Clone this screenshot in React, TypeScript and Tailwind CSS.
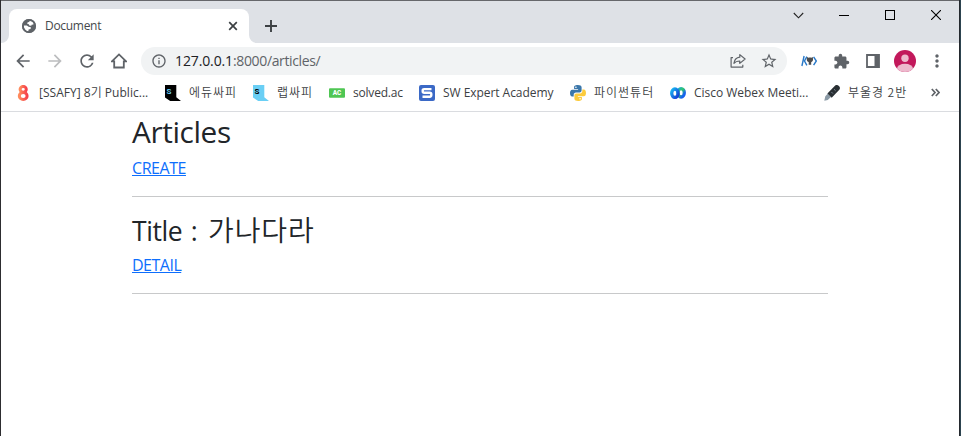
import type { ReactNode } from "react";
import { MdArrowBack, MdArrowForward, MdRefresh, MdInfoOutline, MdStarBorder, MdExtension, MdMoreVert } from "react-icons/md";

function GlobeIcon() {
  return (
    <svg className="size-[14px]" viewBox="0 0 14 14">
      <circle cx="7" cy="7" r="7" fill="#5f6368" />
      <path d="M7.6 1.6h3l1.4 2-.6 1.8-1.8.3-.3 1-2-.1-.4-1.4-1.6-.3.3-1.6 1.7-.3zM1.6 6.6h3.2l1.8 1.2 2.3.4-.3 1.9-2 .4-.3 1.9-1.9-.5-2.1-2.2z" fill="#fff" />
      <circle cx="7" cy="7" r="6.1" fill="none" stroke="#5f6368" strokeWidth="1.8" />
    </svg>
  );
}

function EightIcon() {
  return (
    <svg className="size-4" viewBox="0 0 16 16">
      <defs>
        <linearGradient id="eight" x1="0" x2="1">
          <stop offset="0" stopColor="#ff8a5c" />
          <stop offset="1" stopColor="#f5414b" />
        </linearGradient>
      </defs>
      <g fill="none" stroke="url(#eight)" strokeWidth="3">
        <ellipse cx="8.2" cy="4.3" rx="3.1" ry="2.9" />
        <ellipse cx="8.2" cy="10.9" rx="3.9" ry="3.5" />
      </g>
    </svg>
  );
}

function BookIcon({ fill, letter }: { fill: string; letter: string }) {
  return (
    <svg className="size-4" viewBox="0 0 16 16">
      <path d="M0 0h11.3v12.3L16 16H5.2L0 12.5z" fill={fill} />
      <text x="1.6" y="8.9" fontSize="8" fontWeight="700" fontFamily="Roboto, sans-serif" fill={letter}>S</text>
    </svg>
  );
}

function SolvedIcon() {
  return (
    <svg className="size-4" viewBox="0 0 16 16">
      <rect y="3.3" width="16" height="9.4" rx="1" fill="#4fc653" />
      <text x="3.8" y="10.3" fontSize="6.4" fontWeight="900" fontFamily="Roboto, sans-serif" fill="#fff">AC</text>
    </svg>
  );
}

function ExpertIcon() {
  return (
    <svg className="size-4" viewBox="0 0 16 16">
      <rect width="16" height="16" rx="2" fill="#3b69c6" />
      <path d="M12.5 4.1H5.2c-1.3 0-1.5.6-1.5 1.5v.7c0 1 .4 1.5 1.5 1.5h5.6c1.1 0 1.5.5 1.5 1.5v.8c0 1-.4 1.6-1.5 1.6H3.5" fill="none" stroke="#fff" strokeWidth="2.4" />
    </svg>
  );
}

function PythonIcon() {
  return (
    <svg className="size-4" viewBox="0 0 16 16">
      <path d="M7.9 0C4.7 0 4.1 1 4.1 2.2V4h4v.7H2.2C.8 4.7 0 6 0 8s.8 3.6 2.1 3.6h1.6V9.7c0-1.2 1-2.2 2.2-2.2h3.8c1.1 0 1.9-.8 1.9-1.9V2.2C11.6.8 10 0 7.9 0z" fill="#3b77aa" />
      <path d="M8.1 16c3.2 0 3.8-1 3.8-2.2V12h-4v-.7h5.9C15.2 11.3 16 10 16 8s-.8-3.6-2.1-3.6h-1.6v1.9c0 1.2-1 2.2-2.2 2.2H6.3c-1.1 0-1.9.8-1.9 1.9v3.4C4.4 15.2 6 16 8.1 16z" fill="#fccb3c" />
      <circle cx="5.9" cy="2.2" r=".8" fill="#fff" />
      <circle cx="10.1" cy="13.8" r=".8" fill="#fff" />
    </svg>
  );
}

function WebexIcon() {
  return (
    <svg className="size-4" viewBox="0 0 16 16">
      <defs>
        <linearGradient id="webexRight" x1="0" y1="0" x2="1" y2="1">
          <stop offset="0" stopColor="#1ca7d8" />
          <stop offset=".4" stopColor="#31c96a" />
          <stop offset=".8" stopColor="#1762ee" />
        </linearGradient>
        <linearGradient id="webexLeft" x1="0" y1="0" x2="1" y2="1">
          <stop offset="0" stopColor="#18b6f2" />
          <stop offset="1" stopColor="#1237d4" />
        </linearGradient>
      </defs>
      <ellipse cx="11.1" cy="7.8" rx="3.2" ry="4.2" fill="none" stroke="url(#webexRight)" strokeWidth="3.3" />
      <ellipse cx="4.9" cy="8.2" rx="3.2" ry="4.2" fill="none" stroke="url(#webexLeft)" strokeWidth="3.3" />
    </svg>
  );
}

function PenIcon() {
  return (
    <svg className="size-4" viewBox="0 0 16 16">
      <path d="m.3 15.8 1-4.6 2.4-2.4 3.2 3.1-3.1 3z" fill="#8b9aa6" />
      <path d="m3.4 8.5 7.3-7.6c1.2-1.2 2.6-1.2 3.9-.2 1.7 1.3 1.7 2.9.7 4.1l-7.6 7.9z" fill="#292f33" />
      <path d="m10.2 4.4 1.3 1.3M7.6 7.2l1.3 1.3" stroke="#8b9aa6" strokeWidth="1" />
    </svg>
  );
}

type Bookmark = { icon: ReactNode; label: ReactNode; box: string };

const ko = "font-['Noto_Sans_CJK_KR',sans-serif] font-[350] leading-none";

const bookmarks: Bookmark[] = [
  { icon: <EightIcon />, box: "w-[150px]", label: <span className="tracking-[0.02px]">[SSAFY] 8<span className={ko}>기</span> Public...</span> },
  { icon: <BookIcon fill="#000" letter="#65c9ef" />, box: "w-[88px]", label: <span className={`${ko} tracking-[1px]`}>에듀싸피</span> },
  { icon: <BookIcon fill="#6acff5" letter="#000" />, box: "w-[76px]", label: <span className={`${ko} tracking-[1px]`}>랩싸피</span> },
  { icon: <SolvedIcon />, box: "w-[90px]", label: <span className="tracking-[-0.2px]">solved.ac</span> },
  { icon: <ExpertIcon />, box: "w-[151px]", label: <span className="tracking-[-0.05px]">SW Expert Academy</span> },
  { icon: <PythonIcon />, box: "w-[100px]", label: <span className={`${ko} tracking-[1px]`}>파이썬튜터</span> },
  { icon: <WebexIcon />, box: "w-[154px]", label: <span className="tracking-[-0.02px]">Cisco Webex Meeti...</span> },
  { icon: <PenIcon />, box: "w-[100px]", label: <span className={`${ko} tracking-[0.95px]`}>부울경 2반</span> },
];

function Cell({ children }: { children: ReactNode }) {
  return <div className="flex h-8 w-8 shrink-0 items-center justify-center text-[#5f6368]">{children}</div>;
}

function TabStrip() {
  return (
    <div className="flex h-[42px] shrink-0 bg-[#dee1e6]">
      <div className="relative ml-2 mt-2 flex h-[34px] w-[240px] items-center rounded-t-lg bg-white pl-[13px] pr-[11px]">
        <svg className="absolute -left-2 bottom-0 size-2" viewBox="0 0 8 8"><path d="M8 0v8H0a8 8 0 0 0 8-8z" fill="#fff" /></svg>
        <svg className="absolute -right-2 bottom-0 size-2" viewBox="0 0 8 8"><path d="M0 0v8h8a8 8 0 0 1-8-8z" fill="#fff" /></svg>
        <GlobeIcon />
        <span className="ml-[9px] flex-1 text-[12px] tracking-[-0.3px] text-[#45484c]">Document</span>
        <svg className="size-[10px]" viewBox="0 0 10 10"><path d="m1.2 1.2 7.6 7.6m0-7.6L1.2 8.8" stroke="#3c4043" strokeWidth="1.7" /></svg>
      </div>
      <svg className="ml-4 mt-[19px] size-3" viewBox="0 0 12 12"><path d="M6 0v12M0 6h12" stroke="#3c4043" strokeWidth="1.9" /></svg>
      <div className="ml-auto flex h-7 text-black">
        <div className="flex w-[46px] items-center justify-center"><svg className="size-[11px]" viewBox="0 0 11 11"><path d="m.8 3 4.7 4.8L10.2 3" fill="none" stroke="#222" strokeWidth="1.1" /></svg></div>
        <div className="flex w-[46px] items-center justify-center"><span className="h-px w-[10px] bg-black" /></div>
        <div className="flex w-[46px] items-center justify-center"><span className="size-[10px] border border-black" /></div>
        <div className="flex w-[46px] items-center justify-center"><svg className="size-[10px]" viewBox="0 0 10 10"><path d="m0 0 10 10M10 0 0 10" stroke="#000" strokeWidth="1.1" /></svg></div>
      </div>
    </div>
  );
}

function Toolbar() {
  return (
    <div className="flex h-9 shrink-0 items-center pl-[6px]">
      <Cell><MdArrowBack size={20} /></Cell>
      <Cell><MdArrowForward size={20} className="text-[#bcbdbf]" /></Cell>
      <Cell><MdRefresh size={20} /></Cell>
      <Cell><svg className="size-4" viewBox="0 0 16 16"><path d="M.9 8.3 8 1.4l7.1 6.9H12.8v6.2H3.2V8.3z" fill="none" stroke="currentColor" strokeWidth="1.8" /></svg></Cell>
      <div className="ml-[6px] flex h-7 w-[646px] shrink-0 items-center rounded-full bg-[#f1f3f4] pl-[10px] text-[#5f6368]">
        <MdInfoOutline size={16} />
        <span className="ml-2 flex-1 text-[14px] leading-5 tracking-[-0.36px]"><span className="tracking-[-0.12px] text-[#202124]">127.0.0.1</span>:8000/articles/</span>
        <svg className="mr-[14px] size-4" viewBox="0 0 16 16"><path d="M3 4.6H1.1v9.5h11.7v-2.3M9.8 1.6l5.3 4.4-5.3 4.4V8c-2.8 0-4.5.6-5.9 2.4.4-3.2 2-5.8 5.9-6.2z" fill="none" stroke="currentColor" strokeWidth="1.2" strokeLinejoin="round" /></svg>
        <MdStarBorder size={18} className="mr-[9px]" />
      </div>
      <div className="ml-[6px] flex">
        <Cell>
          <svg className="size-4" viewBox="0 0 16 16">
            <path d="M3.1 3 .9 13M5.9 3.6 3.5 8l2.4 4.4M12.6 3.8 15.3 8l-2.7 4.2" fill="none" stroke="#2878c8" strokeWidth="1.4" />
            <path d="m6 4 1.4.7c1-.3 2-.3 3 0l1.4-.7.2 2c.2 1.8-.7 2.8-1.8 3.1v2.6H7.7V9.1C6.5 8.8 5.6 7.8 5.8 6z" fill="#4c4c4c" />
          </svg>
        </Cell>
        <Cell><MdExtension size={17} /></Cell>
        <Cell><svg className="size-[14px]" viewBox="0 0 14 14"><path d="M1 1h12v12H1z" fill="none" stroke="currentColor" strokeWidth="1.8" /><path d="M8.5 1H13v12H8.5z" fill="currentColor" /></svg></Cell>
        <Cell>
          <svg className="size-[22px]" viewBox="0 0 22 22">
            <defs><clipPath id="avatar"><circle cx="11" cy="11" r="11" /></clipPath></defs>
            <g clipPath="url(#avatar)">
              <path d="M0 0h22v22H0z" fill="#c2185b" />
              <circle cx="11" cy="8.3" r="3.7" fill="#edb9cd" />
              <ellipse cx="11" cy="18.5" rx="8" ry="4.7" fill="#edb9cd" />
            </g>
          </svg>
        </Cell>
        <Cell><MdMoreVert size={20} /></Cell>
      </div>
    </div>
  );
}

function BookmarksBar() {
  return (
    <div className="flex h-[33px] shrink-0 items-center border-b border-[#dadce0] pb-[5px] pl-[14px] text-[12px] text-[#3c4043]">
      {bookmarks.map((b, i) => (
        <div key={i} className={`flex shrink-0 items-center gap-2 whitespace-nowrap leading-4 ${b.box}`}>
          {b.icon}
          <span>{b.label}</span>
        </div>
      ))}
      <svg className="ml-[7px] size-[9px]" viewBox="0 0 9 9"><path d="m.8 1 3.2 3.5L.8 8M4.8 1 8 4.5 4.8 8" fill="none" stroke="#5f6368" strokeWidth="1.7" /></svg>
    </div>
  );
}

export default function App() {
  return (
    <div className="flex h-[436px] w-[961px] overflow-hidden bg-white font-['Open_Sans','Noto_Sans_CJK_KR',sans-serif]">
      <div className="w-px shrink-0 bg-[#2d2d30]" />
      <div className="flex w-[958px] flex-col border-t border-[#66676b]">
        <TabStrip />
        <Toolbar />
        <BookmarksBar />
        <main className="ml-[131px] w-[696px] text-[16px] leading-6 text-[#212529]">
          <h1 className="mb-2 h-[35.8px] pt-[2px] text-[29.8px] leading-[35.8px] tracking-[-0.4px]">Articles</h1>
          <a href="#create" className="block w-fit tracking-[-0.45px] text-[#0d6efd] underline">CREATE</a>
          <hr className="my-4 border-[#c8c9ca]" />
          <h2 className="mb-2 flex h-[31.8px] items-baseline pt-[2px] text-[26.5px] leading-[31.8px]">
            <span className="w-[76px] whitespace-pre tracking-[-0.4px]">Title <span className="ml-[2px]">:</span></span>
            <span className={`${ko} text-[28px] tracking-[0.9px]`}>가나다라</span>
          </h2>
          <a href="#detail" className="block w-fit tracking-[-0.5px] text-[#0d6efd] underline">DETAIL</a>
          <hr className="my-4 border-[#c8c9ca]" />
        </main>
      </div>
      <div className="w-px shrink-0 bg-[#24292e]" />
      <div className="w-px shrink-0 bg-[#2d4450]" />
    </div>
  );
}
